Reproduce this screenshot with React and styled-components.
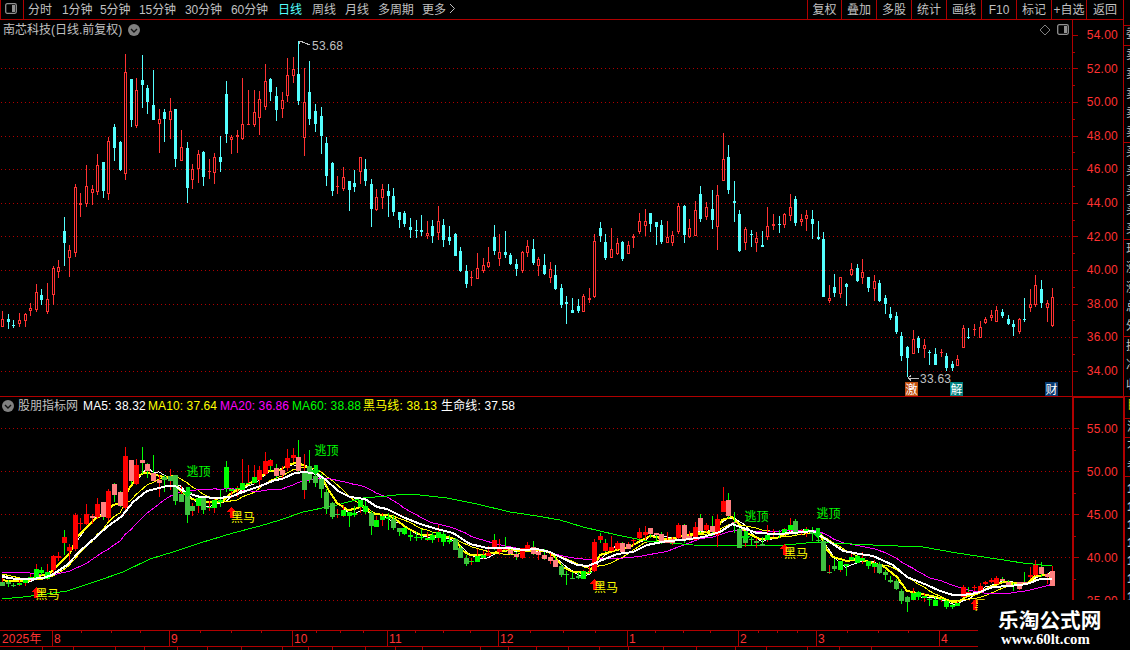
import React from "react";
import styled, { createGlobalStyle } from "styled-components";

const RED = "#b00000";
const BRIGHT = "#ff3232";
const CYAN = "#54ffff";
const GREY = "#c0c0c0";
const LIME = "#00ff00";

const GlobalStyle = createGlobalStyle`
  body { margin: 0; background: #000; overflow: hidden; }
  * { box-sizing: border-box; }
`;

const Window = styled.div`
  display: flex;
  position: relative;
  width: 1130px;
  height: 650px;
  overflow: hidden;
  background: #000;
  color: ${GREY};
  font: 12px/16px "Liberation Sans", "Noto Sans CJK SC", sans-serif;
  white-space: nowrap;
`;
const MainColumn = styled.div`
  display: flex;
  flex-direction: column;
  width: 1123px;
`;
const Toolbar = styled.div`
  display: flex;
  height: 20px;
  border-bottom: 1px solid ${RED};
`;
const LayoutButton = styled.div`
  width: 24px;
  height: 19px;
  padding: 3px 0 0 4px;
  border-left: 1px solid ${RED};
  border-right: 1px solid ${RED};
  line-height: 0;
`;
const Periods = styled.div`
  display: flex;
  flex: 1;
  padding-left: 4px;
`;
const Period = styled.span`
  width: ${(p) => p.$w}px;
  line-height: 20px;
  color: ${(p) => (p.$active ? CYAN : GREY)};
  letter-spacing: -0.1px;
`;
const Tool = styled.span`
  width: ${(p) => p.$w || 35}px;
  border-left: 1px solid ${RED};
  line-height: 20px;
  text-align: center;
`;
const Pane = styled.div`
  display: flex;
  height: ${(p) => p.$h}px;
`;
const Plot = styled.div`
  width: 1072px;
  border-bottom: ${(p) => (p.$ruled ? `1px solid ${RED}` : "none")};
`;
const InfoRow = styled.div`
  display: flex;
  align-items: center;
  height: 20px;
  padding: 0 3px 1px 3px;
  gap: 6px;
`;
const Spacer = styled.div`
  flex: 1;
`;
const IndicatorRow = styled.div`
  display: flex;
  align-items: center;
  height: 18px;
  padding-left: 2px;
`;
const Reading = styled.span`
  width: ${(p) => p.$w}px;
  color: ${(p) => p.$c};
  letter-spacing: ${(p) => p.$ls || 0}px;
`;
const IndicatorName = styled.span`
  width: 65px;
  margin-left: 4px;
`;
const Canvas = styled.svg`
  display: block;
  shape-rendering: crispEdges;
  font: 12px "Liberation Sans", "Noto Sans CJK SC", sans-serif;
`;
const Axis = styled.div`
  display: flex;
  width: 51px;
  overflow: hidden;
  border-left: ${(p) => (p.$bold ? 2 : 1)}px solid ${RED};
  border-top: ${(p) => (p.$bold ? `1px solid ${RED}` : "none")};
  border-bottom: ${(p) => (p.$bold ? "none" : `1px solid ${RED}`)};
`;
const AxisLabels = styled.div`
  margin: ${(p) => p.$top}px 0 0 auto;
  padding-right: 5px;
`;
const AxisLabel = styled.div`
  height: ${(p) => p.$h}px;
  line-height: ${(p) => p.$h}px;
  color: ${BRIGHT};
  letter-spacing: 0.25px;
`;
const TimeAxis = styled.div`
  display: flex;
  position: relative;
  height: 17px;
  border-top: 1px solid ${RED};
  border-bottom: 1px solid ${RED};
`;
const Month = styled.div`
  width: ${(p) => p.$w}px;
  padding-left: ${(p) => (p.$first ? 2 : 1)}px;
  border-left: ${(p) => (p.$first ? "none" : `1px solid ${RED}`)};
  color: ${BRIGHT};
  line-height: 16px;
  letter-spacing: 0.2px;
`;
const TickOverlay = styled.svg`
  position: absolute;
  left: 0;
  top: -1px;
  shape-rendering: crispEdges;
`;
const SidePanel = styled.div`
  width: 7px;
  overflow: hidden;
`;
const SideGroup = styled.div`
  height: ${(p) => p.$h}px;
  padding: ${(p) => p.$pad || 0}px 0 0 2px;
  overflow: hidden;
  border-left: ${(p) => (p.$bold ? 2 : 1)}px solid ${RED};
  border-bottom: 1px solid ${RED};
  color: ${(p) => p.$c || GREY};
  font-weight: ${(p) => (p.$heavy ? 700 : 400)};
`;
const SideLine = styled.div`
  height: ${(p) => p.$h}px;
  line-height: ${(p) => p.$h}px;
`;
const Brand = styled.div`
  position: absolute;
  right: 0;
  bottom: 0;
  width: 152px;
  height: 50px;
  padding: 7px 0 0 20px;
  background: #000;
  color: #fff;
`;
const BrandName = styled.div`
  font: 700 20.7px/24px "Noto Sans CJK SC", sans-serif;
`;
const BrandUrl = styled.div`
  padding-left: 3px;
  font: 700 14.8px/16px "Liberation Serif", serif;
`;

// high, body top, body bottom, low (chart units), u = rising / d = falling, trend colour
const CANDLES = `311 319 327 327 uD|314 319 322 329 dD|320 325 326 328 dD|313 320 324 327 uL|313 314 321 327 uL|303 308 311 316 uL|284 292 310 312 uL|289 295 300 305 dL|283 299 312 314 uL|266 268 295 305 uR|260 267 272 278 uR|217 231 243 266 dR|245 250 258 277 uR|184 187 253 257 uR|193 203 205 217 uR|165 186 204 207 uR|185 189 193 205 uP|154 165 192 195 uR|162 162 191 198 dP|137 141 194 200 uR|124 127 148 161 dP|141 142 170 171 dP|54 72 174 180 uR|79 79 120 127 dP|78 90 126 128 uR|55 80 85 108 dP|85 88 102 114 dP|70 105 120 120 dP|109 119 124 153 uP|109 112 119 142 dD|98 111 120 139 uD|109 109 159 167 dD|130 147 161 161 uD|142 148 188 203 dD|164 169 180 189 uD|150 154 169 183 uL|151 152 177 186 dD|159 171 172 179 uL|153 157 173 184 uL|136 157 162 172 dL|81 94 134 143 dL|135 137 140 154 uL|130 135 137 153 uL|78 124 139 140 uL|90 124 125 125 uL|90 112 125 127 uL|91 99 118 135 uR|64 81 107 110 uR|78 79 92 101 dR|87 96 110 121 dP|92 100 109 118 uP|58 75 96 102 uR|57 69 76 83 uR|41 74 101 105 dP|68 102 138 156 uD|61 92 119 125 dD|104 111 124 132 dD|107 116 136 154 dD|137 143 176 186 dD|162 163 191 196 dD|176 186 187 194 uD|167 177 189 191 uL|181 181 190 211 dL|170 183 187 192 dL|157 157 172 184 uL|159 169 181 186 dL|179 184 209 227 dD|189 197 210 211 uL|184 189 198 209 uL|184 191 196 217 dL|188 196 212 216 dD|212 212 220 228 dD|211 213 224 227 dL|218 227 230 238 dL|220 230 231 238 dL|215 230 232 236 dL|221 233 236 239 uL|220 226 236 243 dL|206 221 233 240 uL|219 225 240 247 dL|226 237 241 245 dL|233 234 256 256 dD|247 251 271 272 dD|265 271 284 288 dD|271 277 278 286 uL|253 268 279 279 uL|258 265 271 273 uL|247 262 267 268 uR|225 237 251 255 dR|234 252 259 266 uR|231 252 255 258 dR|253 255 264 265 dP|259 264 269 276 dP|251 252 271 273 uR|240 246 253 257 uR|239 249 263 265 dP|257 259 266 276 uP|254 265 274 275 dP|262 269 278 283 uP|265 275 289 290 dP|284 288 305 308 dD|296 302 304 324 dD|298 310 313 313 dD|299 306 311 313 dD|294 296 312 312 uL|288 298 300 303 uL|234 241 297 298 uR|222 228 236 242 dR|234 242 258 260 dR|228 249 258 258 uR|238 243 254 255 uR|241 242 259 261 dP|241 245 254 254 uP|234 236 238 248 uR|213 221 232 234 uR|209 221 226 236 uR|213 213 224 232 dP|222 222 227 245 dP|220 225 242 244 dP|221 237 243 243 uP|231 235 243 246 uP|203 206 232 234 uR|205 206 235 243 dP|219 228 237 238 uP|201 210 236 236 uR|186 194 219 222 dP|202 207 217 220 uR|190 209 220 229 dP|185 195 227 250 uR|133 159 181 181 uR|145 157 190 194 dP|181 201 203 222 dP|210 214 251 252 dD|227 229 243 250 uD|230 234 235 247 dD|232 238 243 252 uD|231 245 247 247 dD|207 226 237 240 uL|214 224 226 230 uL|216 224 225 233 dL|213 214 225 228 uL|194 207 216 221 uL|196 199 223 226 dD|214 219 222 226 uL|210 215 219 231 uL|210 219 224 239 dD|221 237 239 240 dD|232 239 297 297 dD|285 298 301 303 uD|274 287 293 297 dD|277 277 294 298 uL|283 284 287 306 dL|263 269 275 276 uL|264 268 281 282 dL|259 272 278 284 uL|277 277 288 292 dL|275 281 289 301 uL|280 283 301 302 dD|295 298 304 314 dD|307 314 318 320 dD|312 316 332 334 dD|332 336 356 361 dD|346 347 358 377 dD|330 339 354 354 uL|336 338 348 353 dL|339 345 349 358 uL|350 352 353 365 dL|348 354 365 365 dL|349 352 353 357 uL|353 356 368 371 dL|361 364 368 371 dL|355 359 366 366 uL|325 328 348 348 uR|328 337 338 339 dR|324 329 330 336 uR|321 327 338 338 uR|317 319 323 324 uR|310 315 318 321 uR|306 310 322 322 uR|309 312 316 318 dP|315 319 324 325 dP|320 324 327 336 dP|318 319 332 334 uP|298 319 320 322 dP|289 304 308 312 uR|275 285 305 307 uR|280 289 303 308 dP|300 303 308 322 uP|288 297 326 327 uP`
  .split("|")
  .map((row, i) => {
    const [hi, top, bot, lo, tag] = row.split(" ");
    return { x: Math.round(2.25 + 5.585 * i), hi: +hi, top: +top, bot: +bot, lo: +lo, up: tag[0] === "u", tone: tag[1] };
  });

const TONES = { R: "#ff0000", P: "#ff8080", L: "#00ff00", D: "#40c040" };

// The indicator pane shows the same prices on a flatter scale
const toLower = (y) => 454.3 + (y - 68.5) * 0.511;
const closes = CANDLES.map((c) => (c.up ? c.top : c.bot));
const average = (n) =>
  closes
    .map((_, i) => (i < n - 1 ? null : `${CANDLES[i].x},${toLower(closes.slice(i - n + 1, i + 1).reduce((a, b) => a + b) / n).toFixed(1)}`))
    .filter(Boolean)
    .join(" ");

const MA5 = "2,575 13,579 19,580 " + average(5);
const MA10 = "2,574 20,578 40,580 " + average(10);
const MA20 = "2,572 23,572 37,574 57,574 70,571 87,563 103,552 " + average(20);
const MA60 =
  "2,599 23,597 40,595 67,591 100,580 123,572 150,559 173,552 200,543 233,533 260,526 280,520 303,512 337,505 363,498 387,496 400,494.5 420,495 447,498 477,504 510,512 537,516 560,520 583,527 617,535 647,541 693,545 737,546 780,545.5 817,542 830,543 873,545 923,547 957,553 997,559 1023,563 1052,566";
const HORSE =
  "2,580 8,581 17,581 28,581 35,577 43,575 50,573 60,563 70,553 77,537 87,527 95,519 103,515 113,505 122,503 130,487 140,475 145,472.5 153,474 163,477 173,480 180,490 190,498 200,502 213,502 222,502 230,494 243,487 258,479 268,471 280,470 290,464 297,463 303,465 313,471 322,477 328,489 337,503 348,510 355,509 362,506 372,514 387,515 395,519 407,528 420,534.5 433,535.5 447,537 455,539 463,551 470,555 483,555 497,552 510,550 523,551 537,550 547,551 555,557 563,567 573,572 588,573 593,567 600,555 617,550 630,547 640,541 650,536 667,539 675,538 687,535 707,532 717,530 722,520 732,517 738,523 747,533 760,539 777,538 790,533 807,531 820,534 827,550 833,557 840,559 847,561 857,559 870,562 883,566 897,577 907,591 923,594 940,598 953,602 960,601 967,596 977,594 990,587 1003,582 1017,583 1027,584 1035,576 1047,575 1052,574";
const LIFE =
  "2,577 17,579 30,579 43,578 52,575 67,565 80,551 97,536 107,527 122,516 133,502 147,491 167,486 175,486 187,493 200,497 217,498 230,497 243,492 263,485 275,480 282,479 295,473 305,472 317,474 325,479 338,491 350,497 365,499 377,507 387,509 403,517 420,524 437,529 453,533 470,544 487,548 510,548 523,550 537,549 550,552 560,557 577,565 588,566 600,561 617,554 633,552 647,545 667,541 683,540 703,537 720,532 732,524 743,528 757,533 777,534 793,533 813,531 827,540 843,551 860,554 873,556 893,565 907,577 927,585 940,591 953,595 963,595 977,593 993,587 1010,586 1027,584 1040,579 1052,579";

const PERIODS = [["分时", 34], ["1分钟", 38], ["5分钟", 39], ["15分钟", 46], ["30分钟", 46], ["60分钟", 47], ["日线", 34], ["周线", 33], ["月线", 33], ["多周期", 44], ["更多", 26]];
const TOOLS = ["复权", "叠加", "多股", "统计", "画线", "F10", "标记", "+自选", "返回"];
const READINGS = [["MA5: 38.32", "#fff", 65, 0.15], ["MA10: 37.64", "#ffff00", 72, 0.1], ["MA20: 36.86", "#ff00ff", 72, 0.1], ["MA60: 38.88", "#00ff00", 71, 0.1], ["黑马线: 38.13", "#ffff00", 78, 0.15], ["生命线: 37.58", "#fff", 80, 0.15]];
const PRICE_GRID = [68, 102, 136, 169, 203, 236, 270, 304, 337, 371];
const LOWER_GRID = [428, 471, 514, 557, 600];
const MONTHS = [["2025年", 52], ["8", 117], ["9", 123], ["10", 95], ["11", 111], ["12", 129], ["1", 111], ["2", 78], ["3", 123], ["4", 184]];
const UPPER_TICKS = [81, 111, 140, 200, 231, 261, 316, 340, 363, 415, 443, 470, 530, 563, 595, 655, 683, 710, 758, 777, 797, 847, 878, 908];
const FOOT_TICKS = [42, 73, 115, 144, 177, 207, 241, 282, 308, 332, 365, 395, 422, 480, 508, 536, 568, 599, 628, 663, 696, 735, 766, 807, 839, 871];

const DotPattern = ({ id }) => (
  <pattern id={id} width="4" height="1" patternUnits="userSpaceOnUse">
    <rect x="1" width="1" height="1" fill="#b00000" />
  </pattern>
);
const GridLine = ({ y, dots }) => <rect x="0" y={y} width="1072" height="1" fill={`url(#${dots})`} />;

const PanelIcon = () => (
  <svg width="12" height="11" viewBox="0 0 12 11">
    <rect x="0.7" y="0.7" width="10.6" height="9.6" rx="1.5" fill="none" stroke="#909090" strokeWidth="1.3" />
    <rect x="7" y="2" width="3" height="7" fill="#909090" />
  </svg>
);
const DropIcon = () => (
  <svg width="12" height="12" viewBox="0 0 12 12">
    <circle cx="6" cy="6" r="6" fill="#808080" />
    <path d="M3 5l3 3 3-3" fill="none" stroke="#111" strokeWidth="1.4" />
  </svg>
);

const PriceCandle = ({ c }) => {
  const color = c.up ? BRIGHT : CYAN;
  return (
    <g fill={color}>
      <rect x={c.x} y={c.hi} width="1" height={c.lo - c.hi} />
      <rect x={c.x - 1} y={c.top} width="3" height={c.bot - c.top} />
      {c.up && c.bot - c.top > 2 && <rect x={c.x} y={c.top + 1} width="1" height={c.bot - c.top - 2} fill="#000" />}
    </g>
  );
};
const TrendCandle = ({ c }) => {
  const y = Math.round(toLower(c.top));
  const hi = Math.round(toLower(c.hi));
  return (
    <g>
      <rect x={c.x} y={hi} width="1" height={Math.round(toLower(c.lo)) - hi} fill={c.up ? "#ff0000" : LIME} />
      <rect x={c.x - 2} y={y} width="5" height={Math.max(1, Math.round(toLower(c.bot)) - y)} fill={TONES[c.tone]} />
    </g>
  );
};
const Badge = ({ x, color, label }) => (
  <g>
    <rect x={x} y="382" width="13" height="14" fill={color} />
    <text x={x + 0.5} y="393.5" fill="#fff">{label}</text>
  </g>
);
const BuyMark = ({ x, y, ty }) => (
  <g>
    <path d={`M${x + 0.5} ${y}l5 5h-3v6h-4v-6h-3z`} fill="#ff0000" />
    <text x={x} y={ty + 4.5} fill="#ffff00">黑马</text>
  </g>
);
const SellMark = ({ x, y, ax, ay }) => (
  <g>
    <path d={`M${ax + 0.5} ${ay}l-5 -5h3v-5h4v5h3z`} fill="#00e010" />
    <text x={x} y={y + 4.5} fill={LIME}>逃顶</text>
  </g>
);

const PriceChart = () => (
  <Canvas width="1072" height="356" viewBox="0 40 1072 356">
    <DotPattern id="price-dots" />
    {PRICE_GRID.map((y) => <GridLine key={y} y={y} dots="price-dots" />)}
    {CANDLES.map((c) => <PriceCandle key={c.x} c={c} />)}
    <path d="M299 41.5h3M299 41v3M300 41l10 4M908 378h11M908 378l3-2.5M908 378l3 2.5" stroke={GREY} fill="none" />
    <text x="312" y="50" fill={GREY} letterSpacing="0.25">53.68</text>
    <text x="920" y="383" fill={GREY} letterSpacing="0.25">33.63</text>
    <Badge x={905} color="#c05010" label="激" />
    <Badge x={950} color="#008080" label="解" />
    <Badge x={1045} color="#083a70" label="财" />
  </Canvas>
);

const TrendChart = () => (
  <Canvas width="1072" height="215" viewBox="0 415 1072 215">
    <DotPattern id="trend-dots" />
    {LOWER_GRID.map((y) => <GridLine key={y} y={y} dots="trend-dots" />)}
    <g fill="none">
      <polyline points={MA5} stroke="#fff" />
      <polyline points={MA10} stroke="#ffff00" />
      <polyline points={MA20} stroke="#ff00ff" />
      <polyline points={MA60} stroke="#00ff00" />
      <polyline points={HORSE} stroke="#ffff00" strokeWidth="2" />
    </g>
    {CANDLES.map((c) => <TrendCandle key={c.x} c={c} />)}
    <polyline points={LIFE} fill="none" stroke="#fff" strokeWidth="2" />
    <SellMark x={186.5} y={471} ax={187} ay={497} />
    <SellMark x={314.5} y={450} ax={315} ay={475} />
    <SellMark x={744.5} y={516} ax={745} ay={541} />
    <SellMark x={816.5} y={513} ax={817} ay={538} />
    <BuyMark x={35.5} y={587} ty={594} />
    <BuyMark x={231} y={507} ty={517} />
    <BuyMark x={594} y={579} ty={587} />
    <BuyMark x={784} y={544} ty={553} />
    <BuyMark x={974.5} y={599} ty={605} />
  </Canvas>
);

const AxisTicks = ({ top, height, majors, minors }) => (
  <svg width="6" height={height} viewBox={`0 ${top} 6 ${height}`} shapeRendering="crispEdges" fill={RED}>
    {majors.map((y) => <rect key={y} x="0" y={y} width="5" height="1" />)}
    {minors.map((y) => <rect key={y} x="0" y={y} width="2" height="1" />)}
  </svg>
);

const SIDE = [
  { h: 26, pad: 25, lines: "" },
  { h: 20, pad: 0, lines: "委", lh: 16 },
  { h: 97, lines: "卖卖卖卖卖", lh: 19.3 },
  { h: 97, lines: "买买买买买", lh: 19.3 },
  { h: 97, lines: "现涨涨总外", lh: 19.3 },
  { h: 60, lines: "换净收", lh: 19.3 },
  { h: 22, lines: "目", lh: 17, c: "#c8c800", bold: true },
  { h: 19, lines: "流", lh: 17, bold: true },
  { h: 39, lines: "不者", lh: 19, bold: true },
  { h: 150, pad: 3, lines: "1111111", lh: 18, bold: true, heavy: true },
];

export default function App() {
  return (
    <Window>
      <GlobalStyle />
      <MainColumn>
        <Toolbar>
          <LayoutButton><PanelIcon /></LayoutButton>
          <Periods>
            {PERIODS.map(([t, w]) => <Period key={t} $w={w} $active={t === "日线"}>{t}</Period>)}
            <svg width="8" height="18" viewBox="0 0 8 18"><path d="M2 4l4.5 4.5L2 13" fill="none" stroke={GREY} /></svg>
          </Periods>
          {TOOLS.map((t) => <Tool key={t} $w={t === "返回" ? 37 : t === "复权" ? 34 : 35}>{t}</Tool>)}
        </Toolbar>

        <Pane $h={377}>
          <Plot $ruled>
            <InfoRow>
              <span>南芯科技(日线.前复权)</span>
              <DropIcon />
              <Spacer />
              <svg width="12" height="12" viewBox="0 0 12 12"><path d="M6 1l5 5-5 5-5-5z" fill="none" stroke="#808080" /></svg>
              <PanelIcon />
            </InfoRow>
            <PriceChart />
          </Plot>
          <Axis>
            <AxisTicks top={20} height={376} majors={[35, ...PRICE_GRID]} minors={[52, 85, 119, 152, 186, 220, 253, 287, 320, 354]} />
            <AxisLabels $top={-1}>
              {[54, 52, 50, 48, 46, 44, 42, 40, 38, 36, 34].map((v) => <AxisLabel key={v} $h={33.6}>{v}.00</AxisLabel>)}
            </AxisLabels>
          </Axis>
        </Pane>

        <Pane $h={233}>
          <Plot>
            <IndicatorRow>
              <DropIcon />
              <IndicatorName>股朋指标网</IndicatorName>
              {READINGS.map(([t, c, w, ls]) => <Reading key={t} $c={c} $w={w} $ls={ls}>{t}</Reading>)}
            </IndicatorRow>
            <TrendChart />
          </Plot>
          <Axis $bold>
            <AxisTicks top={398} height={232} majors={LOWER_GRID} minors={[450, 493, 536, 579]} />
            <AxisLabels $top={10}>
              {[55, 50, 45, 40, 35].map((v) => <AxisLabel key={v} $h={43}>{v}.00</AxisLabel>)}
            </AxisLabels>
          </Axis>
        </Pane>

        <TimeAxis>
          {MONTHS.map(([t, w], i) => <Month key={t} $w={w} $first={i === 0}>{t}</Month>)}
          <TickOverlay width="1123" height="20" fill={RED}>
            {UPPER_TICKS.map((x) => <rect key={x} x={x} y="0" width="1" height="3" />)}
            {FOOT_TICKS.map((x) => <rect key={x} x={x} y="16" width="1" height="4" />)}
          </TickOverlay>
        </TimeAxis>
      </MainColumn>

      <SidePanel>
        {SIDE.map((g, i) => (
          <SideGroup key={i} $h={g.h} $pad={g.pad} $c={g.c} $bold={g.bold} $heavy={g.heavy}>
            {[...g.lines].map((ch, k) => <SideLine key={k} $h={g.lh}>{ch}</SideLine>)}
          </SideGroup>
        ))}
      </SidePanel>

      <Brand>
        <BrandName>乐淘公式网</BrandName>
        <BrandUrl>www.60lt.com</BrandUrl>
      </Brand>
    </Window>
  );
}
